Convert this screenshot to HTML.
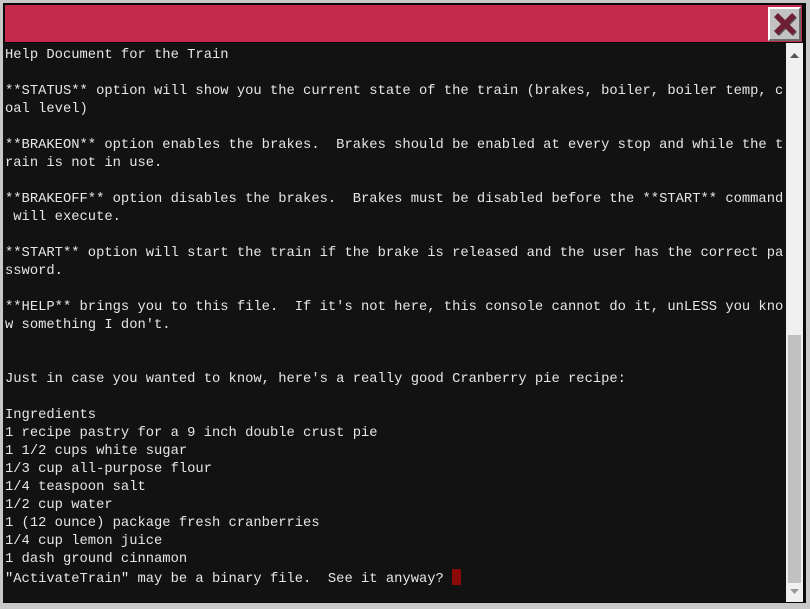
<!DOCTYPE html>
<html><head><style>
html,body{margin:0;padding:0;width:810px;height:609px;overflow:hidden;background:#c8c8c8;}
#win{position:absolute;left:3px;top:3px;width:803px;height:600px;background:#0a0a0a;}
#hdr{position:absolute;left:2px;top:2px;width:797px;height:37px;background:#c4294e;}
#close{position:absolute;left:765px;top:4px;width:33px;height:34px;background:#c3c3c3;border-top:2px solid #fff;border-left:2px solid #fff;border-right:2px solid #6a6a6a;border-bottom:2px solid #6a6a6a;box-sizing:border-box;}
#content{position:absolute;left:0;top:40px;width:783px;height:559px;background:#121212;}
pre{margin:0;position:absolute;left:2px;top:4px;font-family:"Liberation Mono",monospace;font-size:13.8px;line-height:18px;color:#e6e6e6;}
#sb{position:absolute;left:783px;top:40px;width:17px;height:559px;background:#f0f0f0;}
#thumb{position:absolute;left:2px;top:292px;width:13px;height:248px;background:#c1c1c1;}
.cur{display:inline-block;width:9px;height:16px;background:#8a0a0a;vertical-align:-3px;}
</style></head><body>
<div id="win">
<div id="hdr"></div>
<div id="close"><svg width="29" height="30" viewBox="0 0 29 30"><path d="M6 6 L24 24 M24 6 L6 24" stroke="#555" stroke-width="5.5" transform="translate(1,1)"/><path d="M6 6 L24 24 M24 6 L6 24" stroke="#6e1f33" stroke-width="5.5"/></svg></div>
<div id="content"><pre>Help Document for the Train

**STATUS** option will show you the current state of the train (brakes, boiler, boiler temp, c
oal level)

**BRAKEON** option enables the brakes.  Brakes should be enabled at every stop and while the t
rain is not in use.

**BRAKEOFF** option disables the brakes.  Brakes must be disabled before the **START** command
 will execute.

**START** option will start the train if the brake is released and the user has the correct pa
ssword.

**HELP** brings you to this file.  If it's not here, this console cannot do it, unLESS you kno
w something I don't.


Just in case you wanted to know, here's a really good Cranberry pie recipe:

Ingredients
1 recipe pastry for a 9 inch double crust pie
1 1/2 cups white sugar
1/3 cup all-purpose flour
1/4 teaspoon salt
1/2 cup water
1 (12 ounce) package fresh cranberries
1/4 cup lemon juice
1 dash ground cinnamon
"ActivateTrain" may be a binary file.  See it anyway? <span class="cur"></span></pre></div>
<div id="sb">
<svg style="position:absolute;left:4px;top:10px" width="9" height="5"><path d="M0 5 L4.5 0 L9 5Z" fill="#555"/></svg>
<div id="thumb"></div>
<svg style="position:absolute;left:4px;top:546px" width="9" height="5"><path d="M0 0 L4.5 5 L9 0Z" fill="#999"/></svg>
</div>
</div>
</body></html>
